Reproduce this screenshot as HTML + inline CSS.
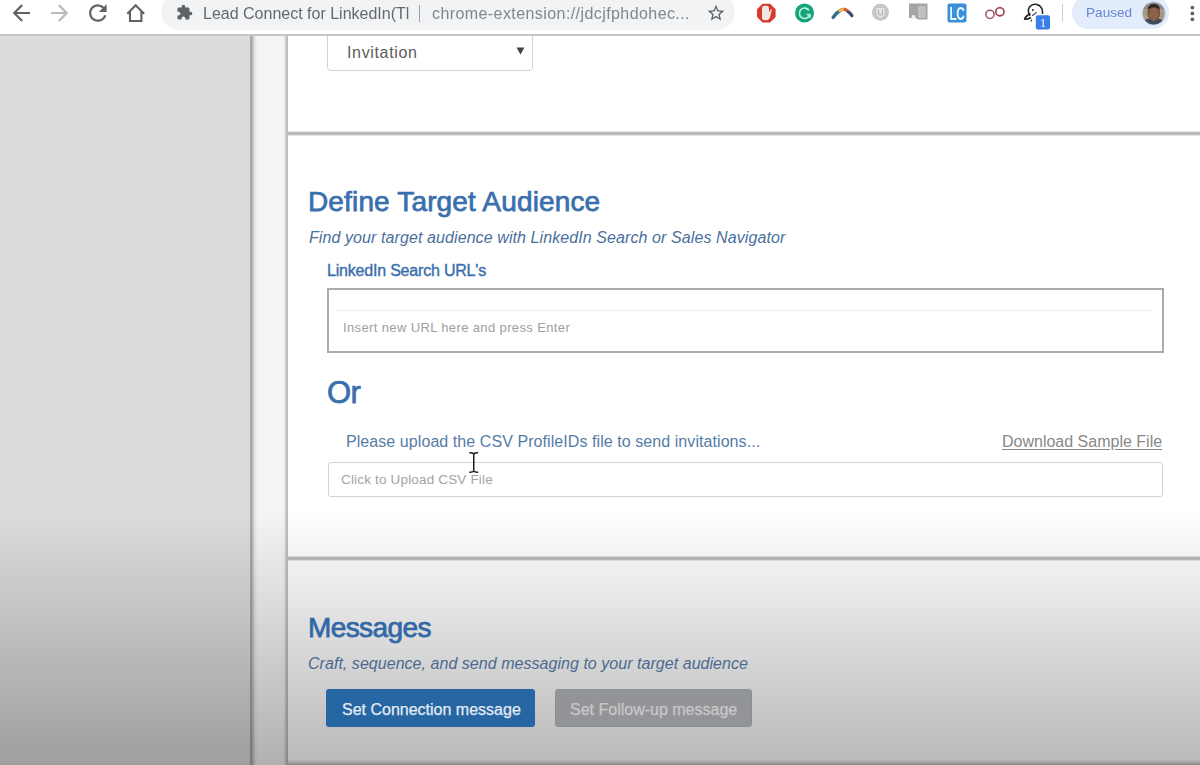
<!DOCTYPE html>
<html><head><meta charset="utf-8">
<style>
*{margin:0;padding:0;box-sizing:border-box}
html,body{width:1200px;height:765px;overflow:hidden;background:#fff;font-family:"Liberation Sans",sans-serif}
.abs{position:absolute}
#toolbar{left:0;top:0;width:1200px;height:35px;background:#fff}
#tbline{left:0;top:34px;width:1200px;height:2px;background:#c4c4c4}
#leftpanel{left:0;top:36px;width:250px;height:729px;background:#dcdcdc}
#vline1{left:250px;top:36px;width:8px;height:729px;background:linear-gradient(to right,#a6a6a6 0,#aaaaaa 2px,#dcdcdd 4px,#ededef 6px,#f4f4f6 8px)}
#vline1b{display:none}
#strip{left:258px;top:36px;width:28px;height:729px;background:#f4f4f6}
#vline2{left:283px;top:36px;width:5px;height:729px;background:linear-gradient(to right,#f4f4f6 0,#e4e4e6 2px,#bcbcbf 3.5px,#c0c0c3 5px)}
#content{left:288px;top:36px;width:912px;height:729px;background:#fff}
.hdiv{left:288px;width:912px;height:5px;background:linear-gradient(rgba(0,0,0,0.03) 0,rgba(0,0,0,0.24) 1.4px,rgba(0,0,0,0.3) 2.5px,rgba(0,0,0,0.24) 3.6px,rgba(0,0,0,0.03) 5px)}
.h1{font-weight:normal;-webkit-text-stroke:0.75px currentColor;color:#3a6fad;font-size:28px;white-space:nowrap;line-height:1}
.it{font-style:italic;color:#4a6f9c;font-size:16px;white-space:nowrap;line-height:1}
.txt{white-space:nowrap;line-height:1}
#omni{left:161px;top:-6px;width:574px;height:36px;border-radius:18px;background:#f1f3f4}
#pill{left:1072px;top:-4px;width:97px;height:33px;border-radius:16px;background:#e3ecfb}
</style></head>
<body>
<div id="root" style="position:absolute;left:0;top:0;width:1200px;height:765px;filter:blur(0.3px)">
<!-- page -->
<div id="leftpanel" class="abs"></div>
<div id="vline1" class="abs"></div>
<div id="vline1b" class="abs"></div>
<div id="strip" class="abs"></div>
<div id="vline2" class="abs"></div>
<div id="content" class="abs"></div>
<div class="abs hdiv" style="top:130.5px"></div>
<div class="abs hdiv" style="top:556px"></div>
<div class="abs" style="left:288px;top:760px;width:912px;height:5px;background:linear-gradient(rgba(0,0,0,0),rgba(0,0,0,0.1) 2px,rgba(0,0,0,0.28))"></div>
<div class="abs" id="overlay" style="left:0;top:510px;width:1200px;height:255px;background:linear-gradient(rgba(0,0,0,0),rgba(0,0,0,0.28))"></div>

<!-- select -->
<div class="abs" style="left:327px;top:20px;width:206px;height:51px;border:1px solid #d2d2d2;border-radius:4px;background:#fff"></div>
<div class="abs txt" id="t_inv" style="left:347px;top:44.8px;font-size:16px;letter-spacing:0.65px;color:#5c5c5c">Invitation</div>
<svg class="abs" style="left:516px;top:47px" width="9" height="8" viewBox="0 0 9 8"><path d="M0.5 0.5h8L4.5 7.5z" fill="#444"/></svg>

<div class="abs h1" id="t_h1" style="left:308px;top:188px;letter-spacing:0.15px">Define Target Audience</div>
<div class="abs it" id="t_it1" style="left:309px;top:230px;letter-spacing:0.09px">Find your target audience with LinkedIn Search or Sales Navigator</div>
<div class="abs txt" id="t_lsu" style="left:327px;top:263px;font-size:16px;-webkit-text-stroke:0.4px currentColor;letter-spacing:-0.2px;color:#3a6fad">LinkedIn Search URL's</div>

<div class="abs" style="left:327px;top:288px;width:837px;height:65px;border:2px solid #ababab;background:#fff"></div>
<div class="abs" style="left:336px;top:310px;width:816px;height:1px;background:#ececec"></div>
<div class="abs txt" id="t_ins" style="left:343px;top:321px;font-size:13px;letter-spacing:0.37px;color:#9e9e9e">Insert new URL here and press Enter</div>

<div class="abs h1" id="t_or" style="left:327px;top:377px;font-size:31px;letter-spacing:-0.6px">Or</div>

<div class="abs txt" id="t_pls" style="left:346px;top:433.5px;font-size:16px;letter-spacing:0.07px;color:#557ca6">Please upload the CSV ProfileIDs file to send invitations...</div>
<div class="abs txt" id="t_dl" style="left:1002px;top:433.8px;font-size:16px;color:#888;text-decoration:underline;text-underline-offset:2.2px">Download Sample File</div>
<div class="abs" style="left:328px;top:462px;width:835px;height:35px;border:1px solid #d4d4d4;border-radius:3px;background:#fff"></div>
<div class="abs txt" id="t_clk" style="left:341px;top:473px;font-size:13.5px;letter-spacing:0.17px;color:#a4a4a4">Click to Upload CSV File</div>

<svg class="abs" style="left:467px;top:451px" width="14" height="23" viewBox="0 0 14 23"><path d="M6.75 2.8V20.3M2.3 1.9Q5.8 1.7 6.75 3Q7.7 1.7 11.2 1.9M2.3 21.2Q5.8 21.4 6.75 20.1Q7.7 21.4 11.2 21.2" fill="none" stroke="#1e1e1e" stroke-width="1.5"/></svg>
<div class="abs h1" id="t_msg" style="left:308px;top:614px;letter-spacing:-0.6px;color:#3268a6">Messages</div>
<div class="abs it" id="t_it2" style="left:308px;top:656px;letter-spacing:0.04px;color:#4b6a8f">Craft, sequence, and send messaging to your target audience</div>

<div class="abs" style="left:326px;top:689px;width:209px;height:38px;border-radius:3px;background:#2566a3"></div>
<div class="abs txt" id="t_b1" style="left:342px;top:701.7px;font-size:16px;-webkit-text-stroke:0.25px currentColor;color:#e4ecf4">Set Connection message</div>
<div class="abs" style="left:555px;top:689px;width:197px;height:38px;border-radius:3px;background:#939497;border:1px solid #8a9098"></div>
<div class="abs txt" id="t_b2" style="left:570px;top:701.7px;font-size:16px;-webkit-text-stroke:0.25px currentColor;color:#c8c8c8">Set Follow-up message</div>
<div id="toolbar" class="abs"></div>
<div id="omni" class="abs"></div>
<div id="pill" class="abs"></div>
<div id="tbline" class="abs"></div>

<!-- nav icons -->
<svg class="abs" style="left:0;top:0" width="160" height="34" viewBox="0 0 160 34">
  <g transform="translate(8.4 0.05) scale(1.08)"><path fill="#5f6368" d="M20 11H7.83l5.59-5.59L12 4l-8 8 8 8 1.41-1.41L7.83 13H20v-2z"/></g>
  <g transform="translate(46.7 0.05) scale(1.08)"><path fill="#b8babc" d="M12 4l-1.41 1.41L16.17 11H4v2h12.17l-5.58 5.59L12 20l8-8z"/></g>
  <g transform="translate(84.65 -0.2) scale(1.1)"><path fill="#5f6368" d="M17.65 6.35A7.958 7.958 0 0 0 12 4c-4.42 0-7.99 3.58-7.99 8s3.57 8 7.99 8c3.73 0 6.84-2.55 7.73-6h-2.08A5.99 5.99 0 0 1 12 18c-3.31 0-6-2.69-6-6s2.69-6 6-6c1.66 0 3.14.69 4.22 1.78L13 11h7V4l-2.35 2.35z"/></g>
  <path d="M127.3 13.8L135.7 5.3l8.4 8.5M130 11.5V21h11.4V11.5" fill="none" stroke="#5f6368" stroke-width="2.1" stroke-linejoin="miter"/>
</svg>

<!-- omnibox content -->
<svg class="abs" style="left:176px;top:4px" width="17" height="17" viewBox="0 0 24 24"><path fill="#5f6368" d="M20.5 11H19V7c0-1.1-.9-2-2-2h-4V3.5C13 2.12 11.88 1 10.5 1S8 2.12 8 3.5V5H4c-1.1 0-1.99.9-1.99 2v3.8H3.5c1.49 0 2.7 1.21 2.7 2.7s-1.21 2.7-2.7 2.7H2V20c0 1.1.9 2 2 2h3.8v-1.5c0-1.49 1.21-2.7 2.7-2.7 1.49 0 2.7 1.21 2.7 2.7V22H17c1.1 0 2-.9 2-2v-4h1.5c1.38 0 2.5-1.12 2.5-2.5S21.88 11 20.5 11z"/></svg>
<div class="abs txt" id="t_lead" style="left:203px;top:5.5px;font-size:16px;color:#65686c">Lead Connect for LinkedIn(Tl</div>
<div class="abs" style="left:419px;top:5px;width:1px;height:17px;background:#9aa0a6"></div>
<div class="abs txt" id="t_url" style="left:432px;top:5.5px;font-size:16px;letter-spacing:0.42px;color:#80868b">chrome-extension://jdcjfphdohec...</div>
<svg class="abs" style="left:706px;top:3px" width="20" height="20" viewBox="0 0 24 24"><path fill="#5f6368" d="M22 9.24l-7.19-.62L12 2 9.19 8.63 2 9.24l5.46 4.73L5.82 21 12 17.27 18.18 21l-1.63-7.03L22 9.24zM12 15.4l-3.76 2.27 1-4.28-3.32-2.88 4.38-.38L12 6.1l1.71 4.04 4.38.38-3.32 2.88 1 4.28L12 15.4z"/></svg>

<!-- extension icons -->
<svg class="abs" style="left:750px;top:0" width="320" height="34" viewBox="750 0 320 34">
  <!-- adblock octagon -->
  <path d="M762.5 3.8h7.6l5.5 5.5v7.6l-5.5 5.5h-7.6l-5.5-5.5V9.3z" fill="#d8392c"/>
  <path d="M762 18V8.2q0-2.5 2.5-2.5h2q2.5 0 2.5 2.5v4.5l1.4-3q.8-.9 1.5 0l-1.7 6.8q-.9 3.8-3.8 3.8h-1.9q-2.5 0-2.5-2.3z" fill="#f0e6e4"/>
  <!-- grammarly -->
  <circle cx="804.5" cy="13" r="9.5" fill="#15a37b"/>
  <path d="M809 10.5A5.2 5.2 0 1 0 809.5 15" fill="none" stroke="#b9f3dc" stroke-width="1.6"/>
  <path d="M806.5 14.5h3.5v3.5" fill="none" stroke="#b9f3dc" stroke-width="1.5"/>
  <!-- bird arc -->
  <path d="M833 17.5Q837 12 841 10" stroke="#2d6d8c" stroke-width="3.2" fill="none" stroke-linecap="round"/>
  <path d="M840 10.5Q843 8.5 845 9.5" stroke="#f0b44a" stroke-width="3.4" fill="none" stroke-linecap="round"/>
  <path d="M845 9.5Q849 11 852 15.5" stroke="#d0603a" stroke-width="3.2" fill="none" stroke-linecap="round"/>
  <path d="M848 12Q850.5 13.5 852 16" stroke="#1d4f8a" stroke-width="2.6" fill="none" stroke-linecap="round"/>
  <!-- U gray -->
  <circle cx="880.5" cy="12.3" r="8.5" fill="#c6c6c6"/>
  <path d="M876.5 8h8v5q0 3.5-4 5q-4-1.5-4-5z" fill="#e6e6e6"/>
  <path d="M878.5 9.5v3.5q0 2 2 2t2-2V9.5" fill="none" stroke="#b4b4b4" stroke-width="1.1"/>
  <!-- gray doc -->
  <path d="M909 3.5h18.5v16H918l-2 -1.5h-7z" fill="#a4a4a4"/>
  <path d="M918 6h8v12h-8z" fill="#c0c0c0"/>
  <path d="M913.5 15a2 2 0 1 0 0.1 0z" fill="#eee"/>
  <!-- LC -->
  <rect x="947.5" y="3.5" width="19" height="19" rx="2" fill="#3a8fd6"/>
  <text x="957" y="20.3" font-family="Liberation Sans" font-weight="bold" font-size="18" fill="#e8fbff" text-anchor="middle" letter-spacing="-0.5" transform="translate(957 0) scale(0.66 1) translate(-957 0)">LC</text>
  <!-- oo -->
  <circle cx="990" cy="14.3" r="4.1" fill="none" stroke="#a05868" stroke-width="1.5"/>
  <circle cx="999.9" cy="11.8" r="4.1" fill="none" stroke="#9a3e50" stroke-width="1.6"/>
  <!-- duck -->
  <path d="M1030 16Q1027 11 1029.5 7Q1032.5 3.5 1037 4.5Q1042 6 1042.5 11.5V14M1030.5 13.5Q1026 15.5 1024.5 19Q1026.5 20 1031 17.5" fill="none" stroke="#222" stroke-width="1.5" stroke-linejoin="round"/>
  <circle cx="1032.8" cy="10" r="1" fill="#222"/>
  <path d="M1036.5 12q-2 3-4.5 3.5M1032 19.5l-1.2 2" fill="none" stroke="#333" stroke-width="1.1"/>
  <rect x="1035.8" y="15.3" width="14.2" height="14.2" rx="2" fill="#3b7fe6"/>
  <text x="1043" y="27" font-family="Liberation Serif" font-size="12" fill="#fff" text-anchor="middle">1</text>
  <!-- separator -->
  <rect x="1062" y="4" width="1" height="18" fill="#cfcfcf"/>
</svg>
<div class="abs txt" id="t_paused" style="left:1086px;top:6px;font-size:13.6px;color:#6787d6">Paused</div>
<svg class="abs" style="left:1140px;top:1px" width="28" height="26" viewBox="0 0 28 26">
  <defs><clipPath id="av"><circle cx="13.7" cy="12.4" r="11"/></clipPath></defs>
  <circle cx="13.7" cy="12.4" r="12.2" fill="#c9d8f3"/>
  <g clip-path="url(#av)">
    <rect x="0" y="0" width="28" height="26" fill="#a89b83"/>
    <rect x="0" y="0" width="28" height="8" fill="#8c8a90"/>
    <ellipse cx="13.8" cy="12" rx="6.3" ry="8" fill="#6e4b38"/>
    <ellipse cx="13.8" cy="13" rx="5" ry="6.3" fill="#8a614a"/>
    <path d="M7.5 8.5q1-5.5 6.3-5.5t6.3 5.5q-2-2.5-6.3-2.5t-6.3 2.5z" fill="#2e2420"/>
    <path d="M2 22q3-4 7-4.5l4.8 3 4.8-3q4 .5 7 4.5v5H2z" fill="#3e4a5a"/>
  </g>
</svg>
<svg class="abs" style="left:1188px;top:4px" width="10" height="20" viewBox="0 0 10 20">
  <circle cx="4.4" cy="3.6" r="1.9" fill="#5f6368"/>
  <circle cx="4.4" cy="9.4" r="1.9" fill="#5f6368"/>
  <circle cx="4.4" cy="15.3" r="1.9" fill="#5f6368"/>
</svg>

</div>
</body></html>
